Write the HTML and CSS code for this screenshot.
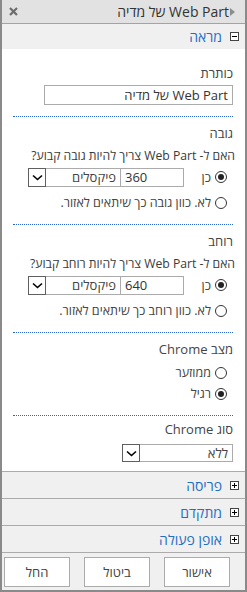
FILE: index.html
```html
<!DOCTYPE html>
<html lang="he" dir="rtl">
<head>
    <meta charset="UTF-8">
    <meta name="viewport" content="width=device-width, initial-scale=1.0">
    <title>Web Part של מדיה</title>
    <link rel="stylesheet" href="styles.css">
</head>
<body>

    <div class="panel">
        <div class="panel-head">
            <span class="head-arrow"></span>
            <span class="head-title">Web Part של מדיה</span>
            <span class="head-close">
                <svg width="9" height="9" viewBox="0 0 9 9"><path d="M1 1 L8 8 M8 1 L1 8" stroke="#6d6d6d" stroke-width="2.2"/></svg>
            </span>
        </div>

        <div class="section-head">
            <span class="toggle">
                <svg width="9" height="9" viewBox="0 0 9 9"><rect x="0.5" y="0.5" width="8" height="8" fill="#fff" stroke="#444"/><path d="M2 4.5 H7" stroke="#000"/></svg>
            </span>
            <span class="section-title">מראה</span>
        </div>

        <div class="section-body">
            <div class="group group-title">
                <div class="field-label">כותרת</div>
                <input type="text" class="text-input title-input" value="Web Part של מדיה">
            </div>

            <div class="group">
                <div class="field-label">גובה</div>
                <div class="question">האם ל- Web Part צריך להיות גובה קבוע?</div>
                <div class="choice-row">
                    <span class="radio checked"></span>
                    <span class="yes">כן</span>
                    <input type="text" class="text-input size-input" value="360">
                    <div class="select unit-select">
                        <span class="select-text">פיקסלים</span>
                        <span class="select-btn">
                            <svg width="11" height="7" viewBox="0 0 11 7"><path d="M1 1.5 L5.5 5.5 L10 1.5" fill="none" stroke="#000" stroke-width="1.6"/></svg>
                        </span>
                    </div>
                </div>
                <div class="choice">
                    <span class="radio"></span>
                    <span>לא. כוון גובה כך שיתאים לאזור.</span>
                </div>
            </div>

            <div class="group">
                <div class="field-label">רוחב</div>
                <div class="question">האם ל- Web Part צריך להיות רוחב קבוע?</div>
                <div class="choice-row">
                    <span class="radio checked"></span>
                    <span class="yes">כן</span>
                    <input type="text" class="text-input size-input" value="640">
                    <div class="select unit-select">
                        <span class="select-text">פיקסלים</span>
                        <span class="select-btn">
                            <svg width="11" height="7" viewBox="0 0 11 7"><path d="M1 1.5 L5.5 5.5 L10 1.5" fill="none" stroke="#000" stroke-width="1.6"/></svg>
                        </span>
                    </div>
                </div>
                <div class="choice">
                    <span class="radio"></span>
                    <span>לא. כוון רוחב כך שיתאים לאזור.</span>
                </div>
            </div>

            <div class="group">
                <div class="field-label">מצב Chrome</div>
                <div class="choice first">
                    <span class="radio"></span>
                    <span>ממוזער</span>
                </div>
                <div class="choice tight">
                    <span class="radio checked"></span>
                    <span>רגיל</span>
                </div>
            </div>

            <div class="group last">
                <div class="field-label">סוג Chrome</div>
                <div class="select type-select">
                    <span class="select-text">ללא</span>
                    <span class="select-btn">
                        <svg width="11" height="7" viewBox="0 0 11 7"><path d="M1 1.5 L5.5 5.5 L10 1.5" fill="none" stroke="#000" stroke-width="1.6"/></svg>
                    </span>
                </div>
            </div>
        </div>

        <div class="section-head closed">
            <span class="toggle">
                <svg width="9" height="9" viewBox="0 0 9 9"><rect x="0.5" y="0.5" width="8" height="8" fill="#fff" stroke="#444"/><path d="M2 4.5 H7 M4.5 2 V7" stroke="#000"/></svg>
            </span>
            <span class="section-title">פריסה</span>
        </div>
        <div class="section-head closed">
            <span class="toggle">
                <svg width="9" height="9" viewBox="0 0 9 9"><rect x="0.5" y="0.5" width="8" height="8" fill="#fff" stroke="#444"/><path d="M2 4.5 H7 M4.5 2 V7" stroke="#000"/></svg>
            </span>
            <span class="section-title">מתקדם</span>
        </div>
        <div class="section-head closed">
            <span class="toggle">
                <svg width="9" height="9" viewBox="0 0 9 9"><rect x="0.5" y="0.5" width="8" height="8" fill="#fff" stroke="#444"/><path d="M2 4.5 H7 M4.5 2 V7" stroke="#000"/></svg>
            </span>
            <span class="section-title">אופן פעולה</span>
        </div>

        <div class="panel-foot">
            <button class="btn">אישור</button>
            <button class="btn">ביטול</button>
            <button class="btn">החל</button>
        </div>
    </div>

</body>
</html>
```

FILE: styles.css
```css
* {
    box-sizing: border-box;
}
body {
    margin: 0;
    font-family: "Open Sans", "Liberation Sans", sans-serif;
    font-size: 13px;
    color: #444;
    background: #fff;
}
.panel {
    width: 247px;
    height: 592px;
    border: 2px solid #8a8a8a;
    border-top: none;
    background: #f0f0f0;
    display: flex;
    flex-direction: column;
}
.panel-head {
    height: 24px;
    flex: none;
    display: flex;
    align-items: center;
    padding: 0 5px 0 5px;
    background: #e2e2e2;
    border-bottom: 1px solid #a3a3a3;
    color: #333;
}
.head-arrow {
    width: 0;
    height: 0;
    border-top: 4px solid transparent;
    border-bottom: 4px solid transparent;
    border-right: 5px solid transparent;
    border-left: 5px solid #8c8c8c;
    margin-left: 1px;
}
.head-title {
    flex: 1;
    font-size: 14px;
}
.head-close {
    display: flex;
    margin-left: 2px;
}
.section-head {
    height: 25px;
    flex: none;
    display: flex;
    align-items: center;
    padding-right: 6px;
}
.section-head.closed {
    height: 27px;
    border-top: 1px solid #ababab;
}
.toggle {
    display: flex;
    margin-left: 8px;
}
.section-title {
    color: #1f6fc4;
    font-size: 14px;
}
.section-body {
    background: #fff;
    height: 422px;
    flex: none;
    padding: 0 12px 0 11px;
}
.group {
    border-bottom: 1px dotted #2a64d2;
    padding: 6px 0 11px;
}
.group.last {
    border-bottom: none;
    padding-top: 3px;
}
.group-title {
    padding: 14px 0 11px;
}
.field-label {
    line-height: 20px;
}
.question {
    font-size: 12.2px;
    line-height: 20px;
    margin-top: 3px;
    margin-right: -2px;
    white-space: nowrap;
    color: #3a3a3a;
}
.text-input {
    display: block;
    height: 20px;
    border: 1px solid #ababab;
    background: #fff;
    font-family: inherit;
    font-size: 13px;
    color: #333;
    padding: 0 4px;
    outline: none;
}
.title-input {
    width: 189px;
    margin: 2px 0 0 0;
    margin-left: auto;
}
.choice-row {
    display: flex;
    align-items: center;
    height: 20px;
    margin-top: 1px;
    padding-right: 6px;
}
.yes {
    width: 27px;
}
.size-input {
    width: 64px;
    height: 19px;
    direction: ltr;
    text-align: left;
}
.select {
    display: flex;
    align-items: center;
    height: 19px;
    border: 1px solid #ababab;
    background: #fff;
}
.unit-select {
    width: 93px;
    margin-right: -1px;
}
.type-select {
    width: 111px;
    height: 18px;
    margin-top: 5px;
}
.select-text {
    flex: 1;
    padding-right: 4px;
    line-height: 16px;
}
.select-btn {
    width: 18px;
    height: 19px;
    margin: -1px;
    border: 1px solid #5f5f5f;
    display: flex;
    align-items: center;
    justify-content: center;
}
.type-select .select-btn {
    height: 18px;
}
.choice {
    display: flex;
    align-items: center;
    font-size: 12.5px;
    line-height: 20px;
    margin-top: 6px;
    padding-right: 6px;
    white-space: nowrap;
}
.choice.first {
    margin-top: 4px;
}
.choice.tight {
    margin-top: 1px;
}
.radio {
    flex: none;
    width: 12px;
    height: 12px;
    border: 1px solid #333;
    border-radius: 50%;
    background: #fff;
    margin-left: 4px;
    position: relative;
}
.radio.checked::after {
    content: "";
    position: absolute;
    top: 2px;
    left: 2px;
    width: 6px;
    height: 6px;
    border-radius: 50%;
    background: #222;
}
.panel-foot {
    flex: 1;
    border-top: 1px solid #ababab;
    display: flex;
    align-items: center;
    gap: 14px;
    padding-right: 15px;
}
.btn {
    width: 66px;
    height: 30px;
    border: 1px solid #ababab;
    background: #fff;
    font-family: inherit;
    font-size: 13px;
    color: #444;
    padding: 0;
}
```
